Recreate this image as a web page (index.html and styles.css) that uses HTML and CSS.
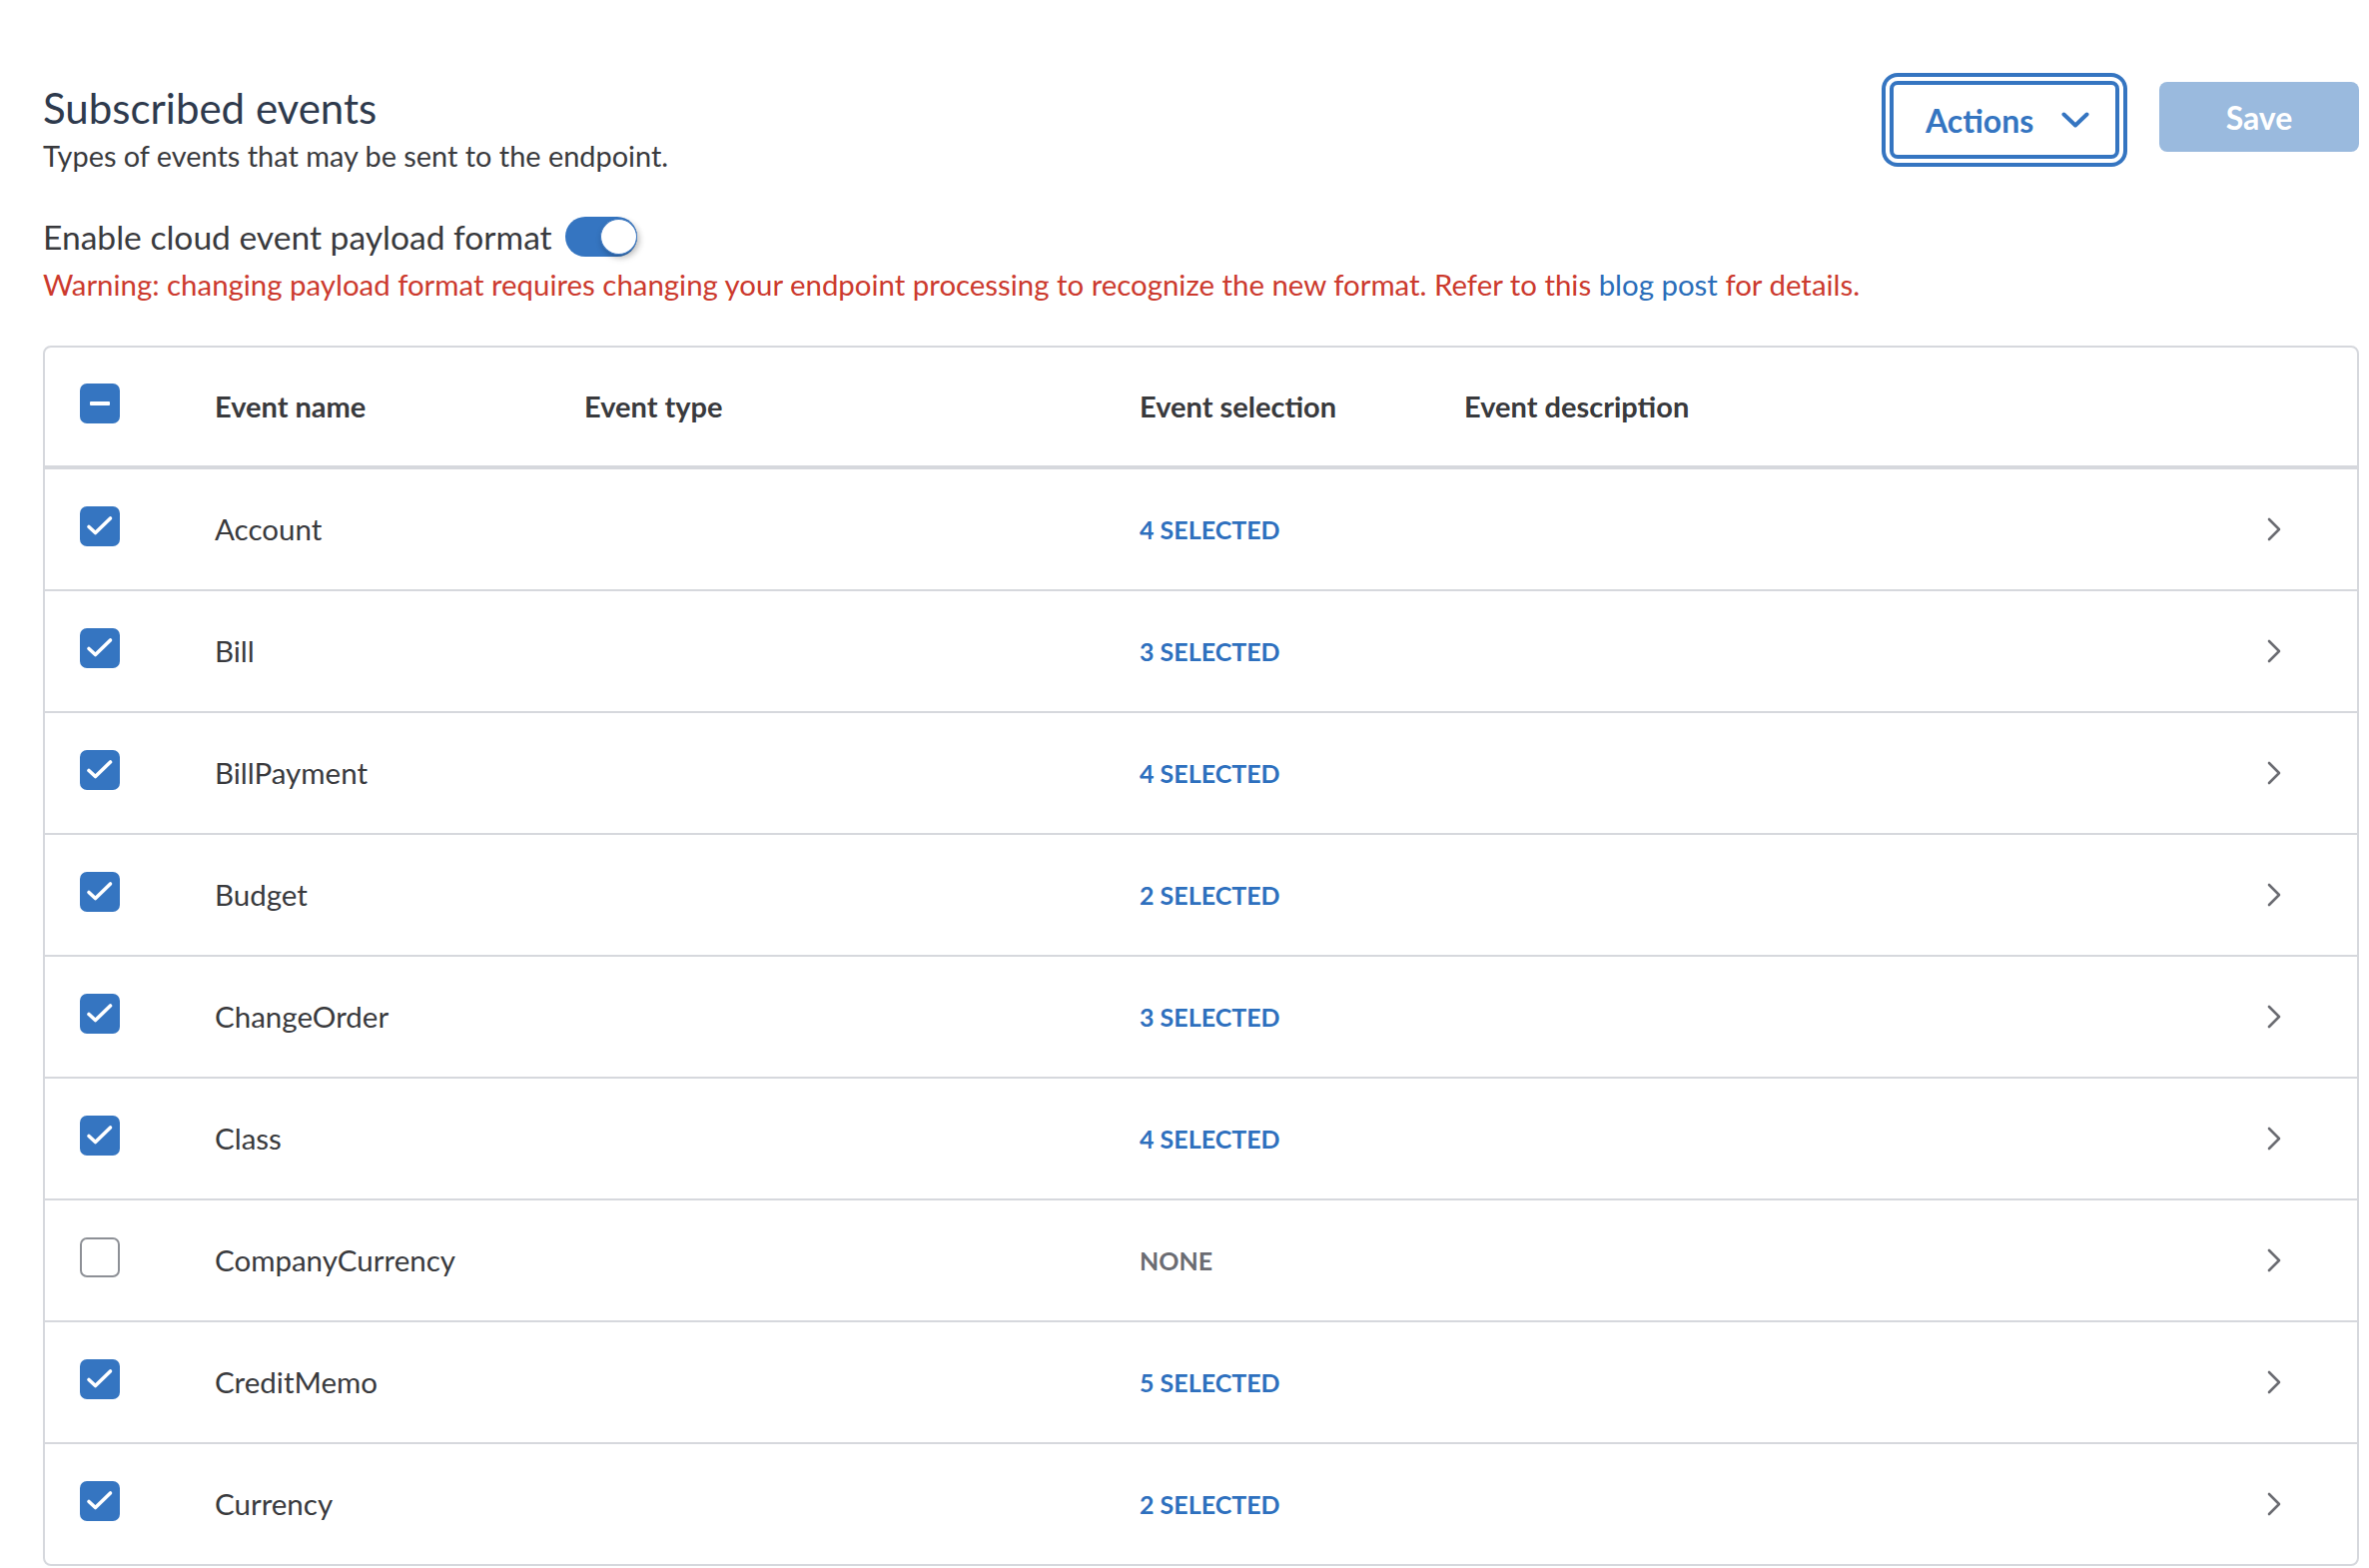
FILE: index.html
```html
<!DOCTYPE html>
<html lang="en">
<head>
<meta charset="utf-8">
<title>Subscribed events</title>
<link rel="stylesheet" href="styles.css">
</head>
<body>
<main class="page">
  <header class="top">
    <div class="intro">
      <h1 class="title">Subscribed events</h1>
      <p class="subtitle">Types of events that may be sent to the endpoint.</p>
    </div>
    <div class="actions">
      <button class="btn btn-actions" type="button">
        <span>Actions</span>
        <svg class="btn-chevron" width="28" height="16" viewBox="0 0 28 16"><path d="M2.5 2.5 L14 13.5 L25.5 2.5" fill="none" stroke="currentColor" stroke-width="4" stroke-linecap="round" stroke-linejoin="round"/></svg>
      </button>
      <button class="btn btn-save" type="button" disabled>Save</button>
    </div>
  </header>

  <div class="toggle-row">
    <span class="toggle-label">Enable cloud event payload format</span>
    <span class="toggle"><span class="knob"></span></span>
  </div>
  <p class="warning">Warning: changing payload format requires changing your endpoint processing to recognize the new format. Refer to this <a class="link" href="#">blog post</a> for details.</p>

  <div class="table">
    <div class="row head">
      <span class="cb cb-on"><span class="dash"></span></span>
      <span class="th">Event name</span>
      <span class="th">Event type</span>
      <span class="th">Event selection</span>
      <span class="th">Event description</span>
      <span></span>
    </div>

    <div class="row">
      <span class="cb cb-on"><svg width="40" height="40" viewBox="0 0 40 40"><path d="M9 20.5 L15.5 26.5 L30.5 12" fill="none" stroke="#fff" stroke-width="3.6" stroke-linecap="round" stroke-linejoin="round"/></svg></span>
      <span class="td">Account</span><span></span>
      <span class="sel">4 SELECTED</span><span></span>
      <svg class="chev" width="14" height="24" viewBox="0 0 14 24"><path d="M2 2 L12 12 L2 22" fill="none" stroke="#6b6c72" stroke-width="2.6" stroke-linecap="round" stroke-linejoin="round"/></svg>
    </div>
    <div class="row">
      <span class="cb cb-on"><svg width="40" height="40" viewBox="0 0 40 40"><path d="M9 20.5 L15.5 26.5 L30.5 12" fill="none" stroke="#fff" stroke-width="3.6" stroke-linecap="round" stroke-linejoin="round"/></svg></span>
      <span class="td">Bill</span><span></span>
      <span class="sel">3 SELECTED</span><span></span>
      <svg class="chev" width="14" height="24" viewBox="0 0 14 24"><path d="M2 2 L12 12 L2 22" fill="none" stroke="#6b6c72" stroke-width="2.6" stroke-linecap="round" stroke-linejoin="round"/></svg>
    </div>
    <div class="row">
      <span class="cb cb-on"><svg width="40" height="40" viewBox="0 0 40 40"><path d="M9 20.5 L15.5 26.5 L30.5 12" fill="none" stroke="#fff" stroke-width="3.6" stroke-linecap="round" stroke-linejoin="round"/></svg></span>
      <span class="td">BillPayment</span><span></span>
      <span class="sel">4 SELECTED</span><span></span>
      <svg class="chev" width="14" height="24" viewBox="0 0 14 24"><path d="M2 2 L12 12 L2 22" fill="none" stroke="#6b6c72" stroke-width="2.6" stroke-linecap="round" stroke-linejoin="round"/></svg>
    </div>
    <div class="row">
      <span class="cb cb-on"><svg width="40" height="40" viewBox="0 0 40 40"><path d="M9 20.5 L15.5 26.5 L30.5 12" fill="none" stroke="#fff" stroke-width="3.6" stroke-linecap="round" stroke-linejoin="round"/></svg></span>
      <span class="td">Budget</span><span></span>
      <span class="sel">2 SELECTED</span><span></span>
      <svg class="chev" width="14" height="24" viewBox="0 0 14 24"><path d="M2 2 L12 12 L2 22" fill="none" stroke="#6b6c72" stroke-width="2.6" stroke-linecap="round" stroke-linejoin="round"/></svg>
    </div>
    <div class="row">
      <span class="cb cb-on"><svg width="40" height="40" viewBox="0 0 40 40"><path d="M9 20.5 L15.5 26.5 L30.5 12" fill="none" stroke="#fff" stroke-width="3.6" stroke-linecap="round" stroke-linejoin="round"/></svg></span>
      <span class="td">ChangeOrder</span><span></span>
      <span class="sel">3 SELECTED</span><span></span>
      <svg class="chev" width="14" height="24" viewBox="0 0 14 24"><path d="M2 2 L12 12 L2 22" fill="none" stroke="#6b6c72" stroke-width="2.6" stroke-linecap="round" stroke-linejoin="round"/></svg>
    </div>
    <div class="row">
      <span class="cb cb-on"><svg width="40" height="40" viewBox="0 0 40 40"><path d="M9 20.5 L15.5 26.5 L30.5 12" fill="none" stroke="#fff" stroke-width="3.6" stroke-linecap="round" stroke-linejoin="round"/></svg></span>
      <span class="td">Class</span><span></span>
      <span class="sel">4 SELECTED</span><span></span>
      <svg class="chev" width="14" height="24" viewBox="0 0 14 24"><path d="M2 2 L12 12 L2 22" fill="none" stroke="#6b6c72" stroke-width="2.6" stroke-linecap="round" stroke-linejoin="round"/></svg>
    </div>
    <div class="row">
      <span class="cb cb-off"></span>
      <span class="td">CompanyCurrency</span><span></span>
      <span class="sel sel-none">NONE</span><span></span>
      <svg class="chev" width="14" height="24" viewBox="0 0 14 24"><path d="M2 2 L12 12 L2 22" fill="none" stroke="#6b6c72" stroke-width="2.6" stroke-linecap="round" stroke-linejoin="round"/></svg>
    </div>
    <div class="row">
      <span class="cb cb-on"><svg width="40" height="40" viewBox="0 0 40 40"><path d="M9 20.5 L15.5 26.5 L30.5 12" fill="none" stroke="#fff" stroke-width="3.6" stroke-linecap="round" stroke-linejoin="round"/></svg></span>
      <span class="td">CreditMemo</span><span></span>
      <span class="sel">5 SELECTED</span><span></span>
      <svg class="chev" width="14" height="24" viewBox="0 0 14 24"><path d="M2 2 L12 12 L2 22" fill="none" stroke="#6b6c72" stroke-width="2.6" stroke-linecap="round" stroke-linejoin="round"/></svg>
    </div>
    <div class="row">
      <span class="cb cb-on"><svg width="40" height="40" viewBox="0 0 40 40"><path d="M9 20.5 L15.5 26.5 L30.5 12" fill="none" stroke="#fff" stroke-width="3.6" stroke-linecap="round" stroke-linejoin="round"/></svg></span>
      <span class="td">Currency</span><span></span>
      <span class="sel">2 SELECTED</span><span></span>
      <svg class="chev" width="14" height="24" viewBox="0 0 14 24"><path d="M2 2 L12 12 L2 22" fill="none" stroke="#6b6c72" stroke-width="2.6" stroke-linecap="round" stroke-linejoin="round"/></svg>
    </div>
  </div>
</main>
</body>
</html>
```

FILE: styles.css
```css
* { box-sizing: border-box; }

html, body {
  margin: 0;
  padding: 0;
  background: #ffffff;
}

body {
  font-family: Lato, "Noto Sans", "Liberation Sans", sans-serif;
  color: #393a3d;
}

.page {
  padding: 0 10px 0 43px;
}

/* ---------- top area ---------- */
.top {
  display: flex;
  justify-content: space-between;
  align-items: flex-start;
  height: 174px;
}

.intro {
  padding-top: 83px;
}

.title {
  margin: 0;
  font-size: 42px;
  line-height: 50px;
  font-weight: 400;
  color: #2e3a4d;
}

.subtitle {
  margin: 5px 0 0;
  font-size: 28.9px;
  line-height: 36px;
  color: #393a3d;
}

.actions {
  display: flex;
  align-items: flex-start;
  gap: 40px;
  padding-top: 81px;
}

.btn {
  font-family: inherit;
  font-weight: 700;
  font-size: 32px;
  border-radius: 8px;
  display: inline-flex;
  align-items: center;
  justify-content: center;
  padding: 0;
  cursor: pointer;
}

.btn-actions {
  width: 230px;
  height: 78px;
  padding: 0 26px 0 32px;
  justify-content: space-between;
  background: #ffffff;
  color: #3575c1;
  border: 4px solid #3575c1;
  box-shadow: 0 0 0 4px #ffffff, 0 0 0 8px #3575c1;
}

.btn-chevron {
  display: block;
}

.btn-save {
  width: 200px;
  height: 70px;
  margin-top: 1px;
  background: #9abade;
  color: #ffffff;
  border: none;
}

/* ---------- toggle ---------- */
.toggle-row {
  display: flex;
  align-items: center;
  gap: 13px;
  height: 40px;
  margin-top: 43px;
}

.toggle-label {
  font-size: 33.6px;
  line-height: 40px;
  color: #393a3d;
}

.toggle {
  position: relative;
  width: 72px;
  height: 40px;
  border-radius: 20px;
  background: #3575c1;
}

.knob {
  position: absolute;
  top: 2px;
  right: 0;
  width: 37px;
  height: 36px;
  border-radius: 50%;
  background: #ffffff;
  border: 1px solid #3f7ac2;
  box-shadow: 2px 3px 6px rgba(0, 0, 0, 0.28);
}

.warning {
  margin: 10px 0 0;
  font-size: 29.4px;
  line-height: 36px;
  color: #cc3a2e;
}

.link {
  color: #2a6db9;
  text-decoration: none;
}

/* ---------- table ---------- */
.table {
  margin-top: 43px;
  border: 2px solid #d6d8dd;
  border-radius: 8px;
}

.row {
  display: grid;
  grid-template-columns: 135px 370px 556px 325px 1fr 14px;
  align-items: center;
  height: 122px;
  padding: 0 76px 0 35px;
  border-bottom: 2px solid #d6d8dd;
}

.row:last-child {
  border-bottom: none;
  height: 120px;
}

.row.head {
  height: 122px;
  border-bottom: 4px solid #d6d8dd;
}

.th {
  font-size: 29px;
  font-weight: 700;
  line-height: 36px;
  color: #393a3d;
}

.td {
  font-size: 29.5px;
  line-height: 36px;
  color: #393a3d;
}

.sel {
  font-size: 25px;
  font-weight: 700;
  line-height: 30px;
  color: #2e70be;
}

.sel-none {
  color: #6b6c72;
}

.cb {
  width: 40px;
  height: 40px;
  border-radius: 7px;
  margin-bottom: 7px;
  display: flex;
  align-items: center;
  justify-content: center;
}

.cb svg { display: block; }

.cb-on {
  background: #3575c1;
}

.cb-off {
  background: #ffffff;
  border: 2px solid #8d9096;
}

.dash {
  width: 20px;
  height: 4px;
  background: #ffffff;
  border-radius: 1px;
}

.chev {
  display: block;
}
```
